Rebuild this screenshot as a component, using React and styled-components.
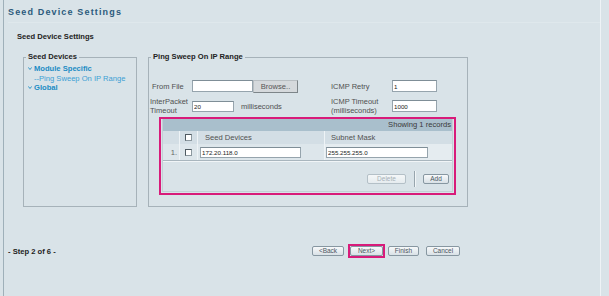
import styled, { createGlobalStyle } from "styled-components"

const Global = createGlobalStyle`
  html, body { margin: 0; padding: 0; }
  body {
    background: #d9e3e8;
    font-family: "Liberation Sans", Arial, sans-serif;
    color: #333;
  }
`

const Page = styled.div`
  margin-left: 3px;
  width: 598px;
  height: 296px;
  box-sizing: border-box;
  border-left: 1px solid #9fb0b9;
  border-right: 1px solid #eef3f6;
  padding: 7px 0 0 4px;
`

const Title = styled.div`
  font-size: 9px;
  line-height: 10px;
  font-weight: bold;
  letter-spacing: 1.15px;
  color: #2b5a7c;
`

const Rule = styled.div`
  margin-top: 5px;
  height: 1px;
  background: #dfe8ec;
`

const SubTitle = styled.div`
  margin-top: 9px;
  padding-left: 9px;
  font-size: 7.6px;
  line-height: 10px;
  font-weight: bold;
  color: #222;
`

const Panels = styled.div`
  display: flex;
  gap: 11px;
  margin-top: 10px;
  padding-left: 15px;
`

const Fieldset = styled.fieldset`
  margin: 0;
  padding: 0 2px 0 1px;
  min-width: 0;
  box-sizing: border-box;
  width: ${p => p.$w}px;
  height: 155px;
  border: 1px solid #a6b2b9;
`

const Legend = styled.legend`
  margin-left: 1px;
  padding: 0 2px;
  font-size: 7.6px;
  line-height: 10px;
  font-weight: bold;
  color: #222;
`

const Tree = styled.div`
  padding: 2px 0 0 3px;
`

const TreeItem = styled.div`
  display: flex;
  align-items: center;
  gap: 2px;
  padding-left: ${p => (p.$child ? 6 : 0)}px;
  font-size: 7.6px;
  line-height: 9.5px;
  font-weight: ${p => (p.$child ? "normal" : "bold")};
  color: ${p => (p.$child ? "#3c9fd4" : "#1b8cc4")};
`

const Chevron = () => (
  <svg width="4" height="3" viewBox="0 0 4 3">
    <polyline points="0.3,0.4 2,2.5 3.7,0.4" fill="none" stroke="#1b8cc4" strokeWidth="0.9" />
  </svg>
)

const FormGrid = styled.div`
  display: grid;
  grid-template-columns: 42px 139px 61px 45px;
  grid-template-rows: 12px 12px;
  row-gap: 8px;
  align-items: center;
  margin-top: 18px;
`

const Label = styled.div`
  font-size: 7.5px;
  line-height: 9px;
  font-weight: normal;
  color: #505050;
  padding-left: ${p => p.$inset || 0}px;
`

const Inline = styled.div`
  display: flex;
  align-items: center;
`

const Input = styled.input`
  box-sizing: border-box;
  width: ${p => p.$w}px;
  height: ${p => p.$h || 11}px;
  margin: 0 0 0 ${p => p.$ml || 0}px;
  padding: 0 1px;
  border: 1px solid #96a4ad;
  border-top-color: #7f8e97;
  background: #fff;
  font-family: "Liberation Sans", Arial, sans-serif;
  font-size: 6.2px;
  color: #222;
  outline: none;
`

const Browse = styled.button`
  box-sizing: border-box;
  width: 45px;
  height: 13px;
  margin: 0;
  padding: 0;
  border: 1px solid #b8bec2;
  border-right-color: #7d8589;
  border-bottom-color: #7d8589;
  background: #d5d9dc;
  font-family: "Liberation Sans", Arial, sans-serif;
  font-size: 7.6px;
  color: #555;
`

const Unit = styled.span`
  margin-left: 7px;
  font-size: 7.5px;
  font-weight: normal;
  color: #505050;
`

const Highlight = styled.div`
  box-sizing: border-box;
  width: 297px;
  margin: 5px 0 0 9px;
  border: 2px solid #d81b7a;
  padding: 0 1px 1px;
`

const GridBox = styled.div`
  border: 1px solid #c3cfd6;
  border-top: none;
`

const RecordsBar = styled.div`
  height: 12px;
  line-height: 12px;
  background: #a9bfcc;
  text-align: right;
  padding-right: 1px;
  font-size: 7.6px;
  color: #3a3a3a;
`

const Table = styled.div`
  display: grid;
  grid-template-columns: 17px 18px 127px 127px;
`

const HeadCell = styled.div`
  height: 13px;
  display: flex;
  align-items: center;
  justify-content: ${p => p.$center ? "center" : "flex-start"};
  padding-left: ${p => p.$pl || 0}px;
  background: #d3dee5;
  border-right: ${p => (p.$last ? "none" : "1px solid #eef3f6")};
  font-size: 7.6px;
  color: #505050;
`

const Cell = styled.div`
  height: 16px;
  display: flex;
  align-items: center;
  justify-content: ${p => p.$align || "flex-start"};
  padding-right: ${p => p.$pr || 0}px;
  background: ${p => p.$light ? "#e5ecf0" : "#dde6eb"};
  border-right: ${p => (p.$last ? "none" : "1px solid #eef3f6")};
  font-size: 7.6px;
  color: #666;
`

const Check = styled.span`
  box-sizing: border-box;
  display: block;
  width: 7px;
  height: 7px;
  margin-right: 1px;
  background: #fff;
  border: 1px solid #8c989f;
  border-top-color: #4f5a61;
  border-left-color: #4f5a61;
`

const Divider = styled.div`
  border-top: 1px solid #a9b6be;
  border-bottom: 1px solid #f1f5f7;
`

const GridFooter = styled.div`
  height: 24px;
  padding: 5px 3px 0 0;
  display: flex;
  align-items: center;
  justify-content: flex-end;
`

const Separator = styled.div`
  width: 1px;
  height: 16px;
  margin: 0 7px 0 8px;
  background: #97a5ad;
  border-right: 1px solid #f1f5f7;
`

const SmallButton = styled.button`
  box-sizing: border-box;
  width: ${p => p.$w}px;
  height: 10px;
  margin: 0 0 0 ${p => p.$ml || 0}px;
  padding: 0;
  border: 1px solid ${p => (p.disabled ? "#b4c0c7" : "#8797a1")};
  border-radius: 2px;
  background: ${p => (p.disabled
    ? "linear-gradient(#f4f7f8, #e6ecef)"
    : "linear-gradient(#f7f9fa, #d9e1e6)")};
  font-family: "Liberation Sans", Arial, sans-serif;
  font-size: 6.5px;
  line-height: 8px;
  color: ${p => (p.disabled ? "#a6b0b6" : "#4b5660")};
`

const Footer = styled.div`
  display: grid;
  grid-template-columns: 304px auto;
  align-items: center;
  height: 14px;
  margin-top: 37px;
`

const Step = styled.div`
  font-size: 7.6px;
  font-weight: bold;
  color: #222;
`

const Buttons = styled.div`
  display: flex;
  align-items: center;
  gap: 4px;
`

const Focus = styled.div`
  display: flex;
  border: 2px solid #d81b7a;
  margin-right: -1px;
`

export default function App() {
  return (
    <Page>
      <Global />
      <Title>Seed Device Settings</Title>
      <Rule />
      <SubTitle>Seed Device Settings</SubTitle>

      <Panels>
        <Fieldset $w={114}>
          <Legend>Seed Devices</Legend>
          <Tree>
            <TreeItem><Chevron />Module Specific</TreeItem>
            <TreeItem $child>--Ping Sweep On IP Range</TreeItem>
            <TreeItem><Chevron />Global</TreeItem>
          </Tree>
        </Fieldset>

        <Fieldset $w={320}>
          <Legend>Ping Sweep On IP Range</Legend>
          <FormGrid>
            <Label $inset={2}>From File</Label>
            <Inline>
              <Input $w={61} $h={12} readOnly value="" />
              <Browse type="button">Browse..</Browse>
            </Inline>
            <Label>ICMP Retry</Label>
            <Input $w={45} $h={12} readOnly value="1" />

            <Label>InterPacket<br />Timeout</Label>
            <Inline>
              <Input $w={42} readOnly value="20" />
              <Unit>milliseconds</Unit>
            </Inline>
            <Label>ICMP Timeout<br />(milliseconds)</Label>
            <Input $w={45} $h={12} readOnly value="1000" />
          </FormGrid>

          <Highlight>
            <GridBox>
              <RecordsBar>Showing 1 records</RecordsBar>
              <Table>
                <HeadCell />
                <HeadCell $center><Check /></HeadCell>
                <HeadCell $pl={7}>Seed Devices</HeadCell>
                <HeadCell $pl={6} $last>Subnet Mask</HeadCell>

                <Cell $align="flex-end" $pr={2}>1.</Cell>
                <Cell $align="center"><Check /></Cell>
                <Cell><Input $w={101} $ml={2} readOnly value="172.20.118.0" /></Cell>
                <Cell $last $light><Input $w={102} $ml={1} readOnly value="255.255.255.0" /></Cell>
              </Table>
              <Divider />
              <GridFooter>
                <SmallButton type="button" $w={39} disabled>Delete</SmallButton>
                <Separator />
                <SmallButton type="button" $w={26}>Add</SmallButton>
              </GridFooter>
            </GridBox>
          </Highlight>
        </Fieldset>
      </Panels>

      <Footer>
        <Step>- Step 2 of 6 -</Step>
        <Buttons>
          <SmallButton type="button" $w={32}>&lt;Back</SmallButton>
          <Focus>
            <SmallButton type="button" $w={33}>Next&gt;</SmallButton>
          </Focus>
          <SmallButton type="button" $w={31}>Finish</SmallButton>
          <SmallButton type="button" $w={34} $ml={3}>Cancel</SmallButton>
        </Buttons>
      </Footer>
    </Page>
  )
}
